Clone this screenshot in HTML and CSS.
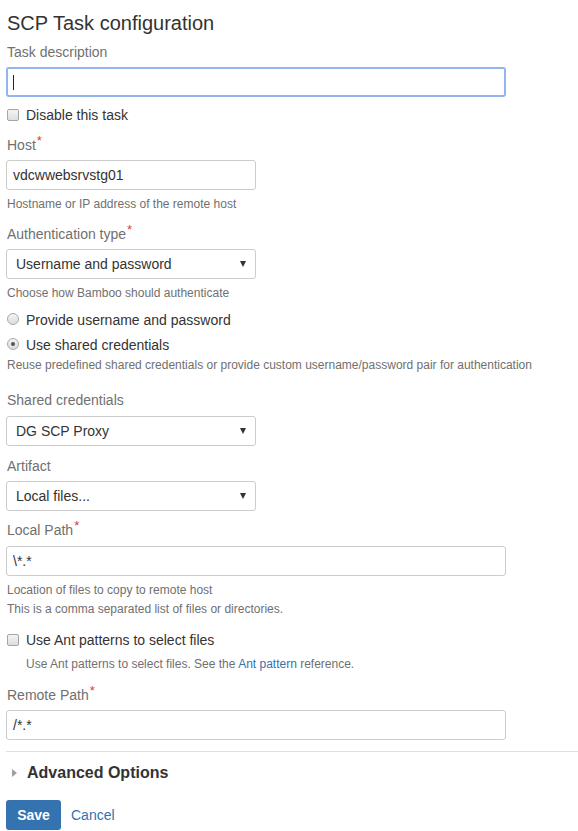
FILE: index.html
```html
<!DOCTYPE html>
<html>
<head>
<meta charset="utf-8">
<link rel="stylesheet" href="styles.css">
</head>
<body>
<div class="page">
  <h1 class="title">SCP Task configuration</h1>

  <div class="label l-desc">Task description</div>
  <div class="input wide focused"><span class="caret"></span></div>

  <div class="check-row r-disable"><span class="checkbox"></span><span>Disable this task</span></div>

  <div class="label l-host">Host<span class="req">*</span></div>
  <div class="input narrow">vdcwwebsrvstg01</div>
  <div class="help h-host">Hostname or IP address of the remote host</div>

  <div class="label l-auth">Authentication type<span class="req">*</span></div>
  <div class="select narrow"><span>Username and password</span><span class="arrow"></span></div>
  <div class="help h-auth">Choose how Bamboo should authenticate</div>

  <div class="check-row r-radio1"><span class="radio"></span><span>Provide username and password</span></div>
  <div class="check-row r-radio2"><span class="radio checked"></span><span>Use shared credentials</span></div>
  <div class="help h-reuse">Reuse predefined shared credentials or provide custom username/password pair for authentication</div>

  <div class="label l-shared">Shared credentials</div>
  <div class="select narrow s-shared"><span>DG SCP Proxy</span><span class="arrow"></span></div>

  <div class="label l-artifact">Artifact</div>
  <div class="select narrow"><span>Local files...</span><span class="arrow"></span></div>

  <div class="label l-local">Local Path<span class="req">*</span></div>
  <div class="input wide i-local">\*.*</div>
  <div class="help h-local1">Location of files to copy to remote host</div>
  <div class="help h-local2">This is a comma separated list of files or directories.</div>

  <div class="check-row r-ant"><span class="checkbox"></span><span>Use Ant patterns to select files</span></div>
  <div class="help h-ant">Use Ant patterns to select files. See the <a class="link" href="#">Ant pattern</a> reference.</div>

  <div class="label l-remote">Remote Path<span class="req">*</span></div>
  <div class="input wide">/*.*</div>

  <div class="divider"></div>

  <div class="advanced"><span class="tri"></span><span>Advanced Options</span></div>

  <div class="buttons">
    <button class="save">Save</button>
    <a class="cancel" href="#">Cancel</a>
  </div>
</div>
</body>
</html>
```

FILE: styles.css
```css
html, body {
  margin: 0;
  padding: 0;
  background: #fff;
}
body {
  font-family: "Liberation Sans", Arial, sans-serif;
  font-size: 14px;
  color: #333;
}
.page {
  padding: 11px 0 0 6px;
}
.title {
  margin: 0 0 0 1px;
  font-size: 20px;
  line-height: 24px;
  font-weight: normal;
  color: #333;
}
.label {
  font-size: 14px;
  line-height: 20px;
  color: #707070;
  margin-left: 1px;
  margin-bottom: 5px;
}
.req {
  color: #d04437;
  font-size: 13px;
  line-height: 0;
  vertical-align: 5px;
  margin-left: 1px;
}
.l-desc { margin-top: 7px; }
.l-host { margin-top: 10px; }
.l-auth { margin-top: 12px; }
.l-shared { margin-top: 17px; margin-bottom: 6px; }
.l-artifact { margin-top: 10px; }
.l-local { margin-top: 9px; margin-bottom: 6px; }
.l-remote { margin-top: 13px; }

.input, .select {
  box-sizing: border-box;
  height: 30px;
  border: 1px solid #ccc;
  border-radius: 3px;
  background: #fff;
  font-size: 14px;
  color: #333;
  display: flex;
  align-items: center;
}
.input { padding: 0 6px; }
.select {
  padding: 0 8px 0 9px;
  justify-content: space-between;
}
.wide { width: 500px; }
.narrow { width: 250px; }
.focused {
  border: 2px solid #92b4ef;
  padding: 0 5px;
}
.caret {
  display: block;
  width: 1px;
  height: 15px;
  background: #222;
}
.arrow {
  width: 0;
  height: 0;
  border-left: 3px solid transparent;
  border-right: 3px solid transparent;
  border-top: 6px solid #333;
  margin-right: 1px;
}

.help {
  font-size: 12px;
  line-height: 16px;
  color: #707070;
  margin-left: 1px;
}
.h-host, .h-auth, .h-local1 { margin-top: 6px; }
.h-reuse { margin-top: 2px; }
.h-local2 { margin-top: 3px; }
.h-ant { margin-top: 6px; margin-left: 20px; }

.check-row {
  display: flex;
  align-items: center;
  line-height: 20px;
  font-size: 14px;
  color: #333;
  margin-left: 1px;
}
.r-disable { margin-top: 8px; }
.r-radio1 { margin-top: 9px; }
.r-radio2 { margin-top: 5px; }
.r-ant { margin-top: 13px; }

.checkbox {
  box-sizing: border-box;
  width: 12px;
  height: 12px;
  border: 1px solid #a5a5a5;
  border-radius: 2px;
  background: linear-gradient(#f4f4f4, #dedede);
  margin-right: 7px;
  margin-top: -1px;
}
.radio {
  box-sizing: border-box;
  width: 12px;
  height: 12px;
  border: 1px solid #a9a9a9;
  border-radius: 50%;
  background: linear-gradient(#f4f4f4, #dcdcdc);
  margin-right: 7px;
  margin-top: -2px;
  display: flex;
  align-items: center;
  justify-content: center;
}
.radio.checked::after {
  content: "";
  width: 4px;
  height: 4px;
  border-radius: 50%;
  background: #555;
}

.link {
  color: #3572b0;
  text-decoration: none;
}

.divider {
  margin-top: 11px;
  height: 1px;
  background: #dfdfdf;
}

.advanced {
  margin-top: 11px;
  display: flex;
  align-items: center;
  font-size: 16px;
  font-weight: bold;
  line-height: 20px;
  color: #333;
}
.tri {
  width: 0;
  height: 0;
  border-top: 4px solid transparent;
  border-bottom: 4px solid transparent;
  border-left: 5px solid #a0a0a0;
  margin-left: 6px;
  margin-right: 10px;
}

.buttons {
  margin-top: 17px;
  display: flex;
  align-items: center;
}
.save {
  box-sizing: border-box;
  height: 30px;
  width: 55px;
  border: 0;
  border-radius: 3px;
  background: #3572b0;
  color: #fff;
  font-family: "Liberation Sans", Arial, sans-serif;
  font-size: 14px;
  font-weight: bold;
  padding: 0;
}
.cancel {
  margin-left: 10px;
  color: #3572b0;
  font-size: 14px;
  text-decoration: none;
}
```
